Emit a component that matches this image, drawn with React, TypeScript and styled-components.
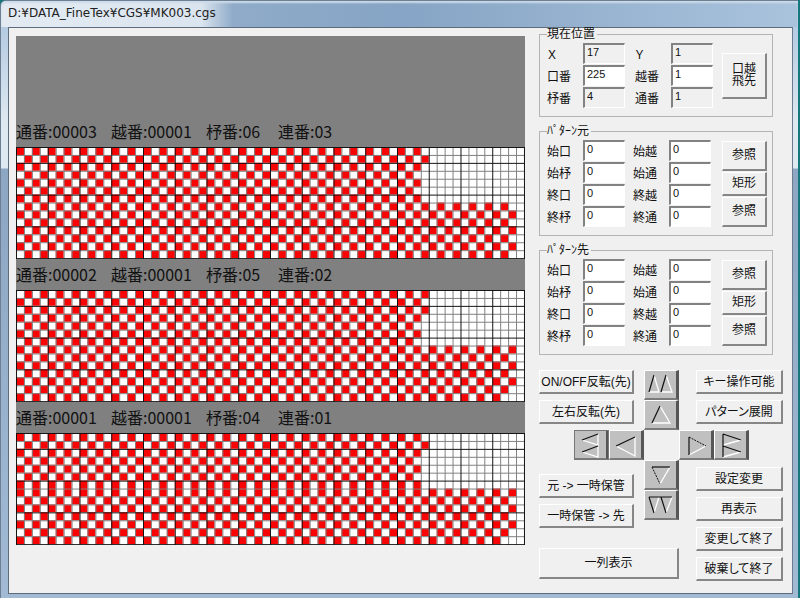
import React from "react";
import styled, { createGlobalStyle } from "styled-components";

const GlobalStyle = createGlobalStyle`
  * { box-sizing: border-box; }
  body {
    margin: 0;
    background: #16787c;
    color: #111;
    font: 12px/14px "Liberation Sans", "Noto Sans CJK JP", sans-serif;
    font-feature-settings: "palt";
  }
  button, input { font: inherit; color: inherit; font-feature-settings: inherit; }
`;

const Window = styled.div`
  display: flex;
  flex-direction: column;
  min-height: 100vh;
  margin-right: 2px;
  padding: 0 5px 4px 7px;
  border: 1px solid #6d7f92;
  border-width: 1px 0 0 1px;
  border-radius: 6px 0 0 0;
  background: linear-gradient(#a9c3de 0, #dde8f1 120px, #dfe9f2 167px, #8ca6c3 168px, #a2bad4 100%);
`;

const TitleBar = styled.header`
  height: 26px;
  margin: 0 -5px 0 -7px;
  padding: 0 7px;
  border-radius: 5px 0 0 0;
  background: linear-gradient(90deg, #e3eaf2 0, #dbe5ef 200px, #8fabc9 232px, #86a4c5 400px, #9cb7d3 640px, #a9c3dd 100%);
  box-shadow: inset 0 2px 2px #cddbe9;
`;

const Title = styled.h1`
  margin: 0;
  font: 12px/25px "DejaVu Sans", sans-serif;
  color: #222;
`;

const Client = styled.main`
  display: flex;
  flex: 1;
  gap: 14px;
  padding-left: 7px;
  border: 1px solid #5e6b7a;
  border-right-color: #6c7c8e;
  background: #f0f0f0;
`;

const Canvas = styled.section`
  flex: 1;
  min-width: 0;
  margin-top: 8px;
  align-self: flex-start;
  background: #808080;
`;

const StripCaption = styled.h2<{ $first?: boolean }>`
  display: grid;
  grid-template-columns: 95px 95px 72px auto;
  align-items: end;
  height: ${(p) => (p.$first ? 111 : 31)}px;
  margin: 0;
  padding-bottom: 6px;
  font: 16px/20px "Noto Sans CJK JP", sans-serif;
`;

const Weave = styled.svg`
  display: block;
  width: 100%;
  background: #fff;
`;

const Side = styled.aside`
  display: flex;
  flex-direction: column;
  gap: 8px;
  width: 253px;
`;

const Group = styled.fieldset`
  display: flex;
  justify-content: space-between;
  width: 234px;
  min-width: 0;
  margin: 0;
  padding: 3px 5px 8px 7px;
  border: 1px solid #b4b4b4;
`;

const Legend = styled.legend`
  padding: 0 2px 0 0;
  font-size: 12px;
  line-height: 12px;
`;

const Fields = styled.div<{ $gap: number }>`
  display: grid;
  grid-template-columns: 36px 42px ${(p) => 36 + p.$gap}px 42px;
  row-gap: 1px;
  & > label:nth-of-type(even) { margin-left: ${(p) => p.$gap}px; }
`;

const FieldLabel = styled.label`
  padding-top: 5px;
  line-height: 14px;
  white-space: nowrap;
`;

const Field = styled.input`
  width: 42px;
  height: 21px;
  padding: 0 2px 4px;
  border: 1px solid #fff;
  border-top: 2px solid #828282;
  border-left: 2px solid #828282;
  border-radius: 0;
  background: #fff;
  font-size: 11px;
  line-height: 14px;
  outline: none;
  &:read-only { background: #f0f0f0; }
`;

const GroupButtons = styled.div`
  display: flex;
  flex-direction: column;
  justify-content: center;
  gap: 1px;
  width: 45px;
`;

const Push = styled.button<{ $h?: number }>`
  width: 100%;
  height: ${(p) => p.$h ?? 24}px;
  padding: 0;
  border: 1px solid #fff;
  border-right: 2px solid #868686;
  border-bottom: 2px solid #868686;
  border-radius: 0;
  background: #f0f0f0;
  line-height: 12px;
  white-space: pre-line;
`;

const Upper = styled.div`
  display: grid;
  grid-template-columns: 35px 35px 25px 10px 35px 17px 18px 35px 34px;
  grid-template-rows: repeat(3, 30px);
  width: 244px;
  margin-top: 7px;
`;

const Place = styled.div<{ $col: string; $row: number }>`
  grid-column: ${(p) => p.$col};
  grid-row: ${(p) => p.$row};
`;

const ArrowButton = styled.button<{ $focused?: boolean }>`
  display: block;
  width: 35px;
  height: 30px;
  padding: 0;
  border: 1px solid #fff;
  border-right: 3px solid #565656;
  border-bottom: 2px solid #7a7a7a;
  border-radius: 0;
  background: #c0c0c0;
  outline: ${(p) => (p.$focused ? "1px solid #777" : "none")};
  outline-offset: -1px;
  & svg { display: block; }
`;

const Lower = styled.div`
  display: flex;
  justify-content: space-between;
  width: 244px;
  margin-top: -8px;
`;

const LowerLeft = styled.div`
  display: flex;
  flex-direction: column;
  gap: 20px;
  width: 140px;
`;

const SaveRow = styled.div`
  display: flex;
  justify-content: space-between;
`;

const Stack = styled.div<{ $w: number; $top?: number; $gap?: number }>`
  display: flex;
  flex-direction: column;
  gap: ${(p) => p.$gap ?? 6}px;
  width: ${(p) => p.$w}px;
  padding-top: ${(p) => p.$top ?? 0}px;
`;

const COLS = 64;
const ROWS = 14;
const CELL = 8;

function lastFilled(row: number) {
  if (row < 3) return 51;
  if (row < 7) return 50;
  return row < 13 ? 62 : 61;
}

type Strip = { caption: string[]; phase: (row: number) => number };

const STRIPS: Strip[] = [
  { caption: ["通番:00003", "越番:00001", "杼番:06", "連番:03"], phase: (r) => r % 2 },
  { caption: ["通番:00002", "越番:00001", "杼番:05", "連番:02"], phase: (r) => (r + 1) % 2 },
  { caption: ["通番:00001", "越番:00001", "杼番:04", "連番:01"], phase: (r) => (r < 7 ? r : r + 1) % 2 },
];

function WeaveGrid({ phase }: { phase: (row: number) => number }) {
  let cells = "";
  for (let r = 0; r < ROWS; r++) {
    for (let c = phase(r); c <= lastFilled(r); c += 2) {
      cells += `M${c * CELL} ${r * CELL}h${CELL}v${CELL}h-${CELL}z`;
    }
  }
  let minor = "";
  let major = "";
  for (let c = 0; c <= COLS; c++) {
    const line = `M${c * CELL + 0.5} 0V${ROWS * CELL + 1}`;
    if (c % 4 === 0) major += line;
    else minor += line;
  }
  for (let r = 0; r <= ROWS; r++) {
    const line = `M0 ${r * CELL + 0.5}H${COLS * CELL + 1}`;
    if (r % 4 === 2 || r === 0) major += line;
    else minor += line;
  }
  return (
    <Weave viewBox={`0 0 ${COLS * CELL + 1} ${ROWS * CELL + 1}`} aria-hidden="true">
      <path d={cells} fill="#f80404" />
      <path d={minor} stroke="#808080" fill="none" />
      <path d={major} stroke="#111" fill="none" />
    </Weave>
  );
}

type ArrowShape = { dark: string; light: string; dotted?: string };

const ARROWS: Record<string, ArrowShape> = {
  up2: { dark: "M4 21L9 4M16 21L21 4", light: "M9 4L14 21H4M21 4L27 21H16" },
  up: { dark: "M7 22L15 5", light: "M15 5L25 22H7" },
  left2: { dark: "M7 9L23 3M7 21L23 15", light: "M23 3V14L7 9M23 15V26L7 21" },
  left: { dark: "M6 15L25 6", light: "M25 6V25L6 15" },
  right: { dark: "M9 6V24", dotted: "M9 6L26 15", light: "M26 15L9 24" },
  right2: { dark: "M8 3V26M8 3L26 9M8 15L26 21", light: "M26 9L8 14M26 21L8 26" },
  down: { dark: "M7 6H25", dotted: "M7 6L15 23", light: "M15 23L25 6" },
  down2: { dark: "M4 6H27M4 6L9 22M16 6L21 22", light: "M9 22L14 6M21 22L27 6" },
};

function Arrow({ kind, label, focused }: { kind: string; label: string; focused?: boolean }) {
  const shape = ARROWS[kind];
  return (
    <ArrowButton type="button" aria-label={label} $focused={focused}>
      <svg width="31" height="27" viewBox="0 0 31 27" fill="none">
        <path d={shape.light} stroke="#fff" strokeWidth="1.3" />
        <path d={shape.dark} stroke="#111" strokeWidth="1.2" />
        {shape.dotted && <path d={shape.dotted} stroke="#111" strokeDasharray="2 1" />}
      </svg>
    </ArrowButton>
  );
}

type FieldSpec = { label: string; value: string; readOnly?: boolean };

function FieldGrid({ id, gap, fields }: { id: string; gap: number; fields: FieldSpec[] }) {
  return (
    <Fields $gap={gap}>
      {fields.map((f, i) => (
        <React.Fragment key={f.label}>
          <FieldLabel htmlFor={`${id}-${i}`}>{f.label}</FieldLabel>
          <Field id={`${id}-${i}`} defaultValue={f.value} readOnly={f.readOnly} />
        </React.Fragment>
      ))}
    </Fields>
  );
}

const POSITION: FieldSpec[] = [
  { label: "Ｘ", value: "17", readOnly: true },
  { label: "Ｙ", value: "1", readOnly: true },
  { label: "口番", value: "225" },
  { label: "越番", value: "1" },
  { label: "杼番", value: "4", readOnly: true },
  { label: "通番", value: "1", readOnly: true },
];

const RANGE: FieldSpec[] = ["始口", "始越", "始杼", "始通", "終口", "終越", "終杼", "終通"].map(
  (label) => ({ label, value: "0" }),
);

function RangeGroup({ id, title }: { id: string; title: string }) {
  return (
    <Group>
      <Legend>{title}</Legend>
      <FieldGrid id={id} gap={8} fields={RANGE} />
      <GroupButtons>
        <Push type="button" $h={30}>参照</Push>
        <Push type="button">矩形</Push>
        <Push type="button" $h={30}>参照</Push>
      </GroupButtons>
    </Group>
  );
}

export default function App() {
  return (
    <>
      <GlobalStyle />
      <Window>
        <TitleBar>
          <Title>D:¥DATA_FineTex¥CGS¥MK003.cgs</Title>
        </TitleBar>
        <Client>
          <Canvas>
            {STRIPS.map((strip, i) => (
              <React.Fragment key={i}>
                <StripCaption $first={i === 0}>
                  {strip.caption.map((text) => (
                    <span key={text}>{text}</span>
                  ))}
                </StripCaption>
                <WeaveGrid phase={strip.phase} />
              </React.Fragment>
            ))}
          </Canvas>
          <Side>
            <Group>
              <Legend>現在位置</Legend>
              <FieldGrid id="pos" gap={10} fields={POSITION} />
              <GroupButtons>
                <Push type="button" $h={46}>{"口越\n飛先"}</Push>
              </GroupButtons>
            </Group>
            <RangeGroup id="src" title="ﾊﾟﾀｰﾝ元" />
            <RangeGroup id="dst" title="ﾊﾟﾀｰﾝ先" />
            <Upper>
              <Place $col="1 / 4" $row={1}><Push type="button">ON/OFF反転(先)</Push></Place>
              <Place $col="5" $row={1}><Arrow kind="up2" label="上へ大きく移動" /></Place>
              <Place $col="7 / 10" $row={1}><Push type="button">キー操作可能</Push></Place>
              <Place $col="1 / 4" $row={2}><Push type="button">左右反転(先)</Push></Place>
              <Place $col="5" $row={2}><Arrow kind="up" label="上へ移動" /></Place>
              <Place $col="7 / 10" $row={2}><Push type="button">パターン展開</Push></Place>
              <Place $col="2" $row={3}><Arrow kind="left2" label="左へ大きく移動" focused /></Place>
              <Place $col="3 / 5" $row={3}><Arrow kind="left" label="左へ移動" /></Place>
              <Place $col="6 / 8" $row={3}><Arrow kind="right" label="右へ移動" /></Place>
              <Place $col="8" $row={3}><Arrow kind="right2" label="右へ大きく移動" /></Place>
            </Upper>
            <Lower>
              <LowerLeft>
                <SaveRow>
                  <Stack $w={95} $top={14}>
                    <Push type="button">元 -&gt; 一時保管</Push>
                    <Push type="button">一時保管 -&gt; 先</Push>
                  </Stack>
                  <Stack $w={35} $gap={0}>
                    <Arrow kind="down" label="下へ移動" />
                    <Arrow kind="down2" label="下へ大きく移動" />
                  </Stack>
                </SaveRow>
                <Push type="button" $h={31}>一列表示</Push>
              </LowerLeft>
              <Stack $w={87} $top={7}>
                <Push type="button">設定変更</Push>
                <Push type="button">再表示</Push>
                <Push type="button">変更して終了</Push>
                <Push type="button">破棄して終了</Push>
              </Stack>
            </Lower>
          </Side>
        </Client>
      </Window>
    </>
  );
}
